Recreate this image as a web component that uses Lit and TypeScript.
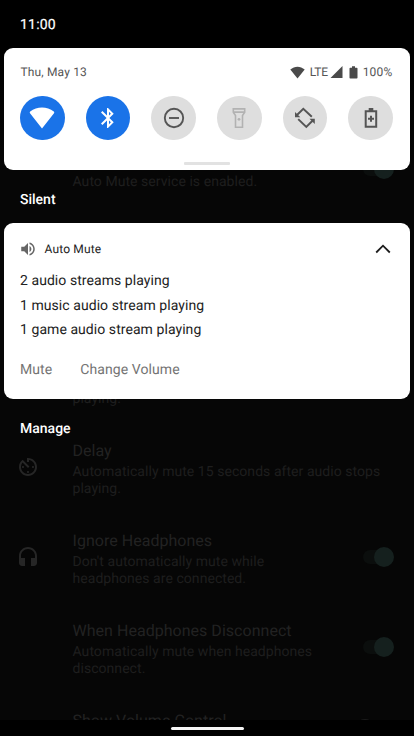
import { LitElement, html, svg, css, nothing } from "lit";
import { customElement, property } from "lit/decorators.js";

const icons: Record<string, unknown> = {
  wifi: svg`<path transform="translate(-1 1)" d="M13 21.4 1 6.3Q.3 5.3 1.2 4.6C8-.9 18-.9 24.8 4.6Q25.7 5.3 25 6.3Z"/>`,
  bluetooth: svg`<path d="M17.71 7.71 12 2h-1v7.59L6.41 5 5 6.41 10.59 12 5 17.59 6.41 19 11 14.41V22h1l5.71-5.71-4.3-4.29zM13 5.83l1.88 1.88L13 9.59zm1.88 10.46L13 18.17v-3.76z"/>`,
  dnd: svg`<g fill="none" stroke="currentColor" stroke-width="1.9"><circle cx="12" cy="12" r="9.2"/><path d="M7 12h10"/></g>`,
  torch: svg`<g fill="none" stroke="currentColor" stroke-width="1.6"><path d="M6.300 2.900h11.400v3.400l-2.200 3.200v11.800H8.500V9.500L6.300 6.300zM6.300 6.100h11.400"/></g><circle cx="12" cy="13.300" r="1.400"/>`,
  rotate: svg`<path fill="none" stroke="currentColor" stroke-width="2" d="M4 9l6.300-6.200 8.500 8M5.200 13.100l8.100 7.800 6.200-6.100"/><path d="M2 6V11.300h5.300zM21.800 12.700v5.300L16.500 12.700z"/>`,
  saver: svg`<path fill="none" stroke="currentColor" stroke-width="2" d="M6.700 5.200h10.500v15.500H6.700zM12 9.800v6M9 12.800h6"/><path d="M9.700 2h4.600v3H9.700z"/>`,
  timer: svg`<path d="M11 17c0 .55.45 1 1 1s1-.45 1-1-.45-1-1-1-1 .45-1 1zm0-14v4h2V5.080c3.390.49 6 3.390 6 6.920 0 3.870-3.130 7-7 7s-7-3.130-7-7c0-1.680.59-3.220 1.580-4.420L12 13l1.410-1.410-6.800-6.800v.02C4.420 6.450 3 9.050 3 12c0 4.970 4.020 9 9 9 4.970 0 9-4.030 9-9s-4.030-9-9-9zm7 9c0-.55-.45-1-1-1s-1 .45-1 1 .45 1 1 1 1-.45 1-1zM6 12c0 .55.45 1 1 1s1-.45 1-1-.45-1-1-1-1 .45-1 1z"/>`,
  headphones: svg`<path d="M12 2c-4.970 0-9 4.030-9 9v7c0 1.660 1.340 3 3 3h3v-8H5v-2c0-3.870 3.130-7 7-7s7 3.130 7 7v2h-4v8h3c1.660 0 3-1.340 3-3v-7c0-4.970-4.030-9-9-9z"/>`,
  volume: svg`<path d="M3 9v6h4l5 5V4L7 9zm13.500 3c0-1.770-1.020-3.290-2.500-4.030v8.050c1.480-.73 2.500-2.250 2.500-4.020zM14 3.230v2.060c2.890.86 5 3.540 5 6.710s-2.110 5.850-5 6.710v2.060c4.010-.91 7-4.490 7-8.770s-2.990-7.860-7-8.770z"/>`,
};

const icon = (name: string, cls = "") =>
  html`<svg class="icon ${cls}" viewBox="0 0 24 24" fill="currentColor" overflow="visible">${icons[name]}</svg>`;

@customElement("quick-panel")
export class QuickPanel extends LitElement {
  static styles = css`
    :host { display: flex; flex-direction: column; box-sizing: border-box; height: 122px; margin: 0 4px;
      padding: 15.500px 17.500px 0 16.500px; border-radius: 9px; background: #fff; color: #555; }
    .status { display: flex; align-items: center; height: 17px; font-size: 12px; }
    .date { letter-spacing: 0.150px; margin-right: auto; }
    .lte { margin: 0 2px 0 5px; font-size: 12px; letter-spacing: -0.300px; }
    .pct { letter-spacing: 0.200px; margin-left: 5px; }
    .glyph { display: block; fill: #4a4a4a; }
    .batt { margin-left: 6px; }
    .tiles { display: flex; justify-content: space-between; margin: 15px -0.500px 0 -0.500px; }
    .tile { display: grid; place-items: center; width: 44.500px; height: 44.500px; border-radius: 50%; background: #dedede; color: #555; }
    .tile.on { background: #1a73e8; color: #fff; }
    .tile.dim { color: #b2b2b2; }
    .icon { display: block; width: 24px; height: 24px; }
    .grip { align-self: center; width: 46px; height: 3px; margin-top: 21.500px; background: #e2e2e2; border-radius: 1px; }
  `;
  render() {
    const tiles = [["wifi", "on"], ["bluetooth", "on"], ["dnd", ""], ["torch", "dim"], ["rotate", ""], ["saver", ""]];
    return html`
      <div class="status">
        <span class="date">Thu, May 13</span>
        <svg class="glyph" width="15" height="13" viewBox="0 0 15 13"><path d="M7.500 12.500.3 3.600C4.500-.3 10.500-.3 14.700 3.600Z"/></svg>
        <span class="lte">LTE</span>
        <svg class="glyph" width="13" height="12" viewBox="0 0 13 12"><path d="M.5 12 12.500 0v12z"/></svg>
        <svg class="glyph batt" width="9" height="13" viewBox="0 0 9 13"><path d="M3 .3h3v1.500h1.700q.8 0 .8.8v9.200q0 .8-.8.800H1.300q-.8 0-.8-.8V2.600q0-.8.8-.8H3z"/></svg>
        <span class="pct">100%</span>
      </div>
      <div class="tiles">${tiles.map(([n, c]) => html`<div class="tile ${c}">${icon(n)}</div>`)}</div>
      <div class="grip"></div>`;
  }
}

@customElement("audio-notification")
export class AudioNotification extends LitElement {
  static styles = css`
    :host { display: flex; flex-direction: column; box-sizing: border-box; height: 176px; margin: 0 4px;
      padding: 16px 16px 0; border-radius: 9px; background: #fff; color: #222; }
    .head { display: flex; align-items: center; height: 20px; font-size: 12px; letter-spacing: 0.150px; }
    .icon { display: block; width: 18px; height: 18px; margin: -1px 8px 0 -1.500px; color: #666; }
    .chev { display: block; width: 16px; height: 10px; margin: -1px 3.500px 0 auto; fill: none; stroke: #1c1c1c; stroke-width: 1.800; }
    .lines { margin-top: 10px; font-size: 14px; line-height: 24.500px; letter-spacing: 0.060px; }
    .actions { display: flex; gap: 28px; margin-top: 17px; font-size: 14px; line-height: 20px; letter-spacing: 0.080px; color: #747474; }
  `;
  render() {
    return html`
      <div class="head">${icon("volume")}<span>Auto Mute</span>
        <svg class="chev" viewBox="0 0 16 10"><path d="M1.200 8.500 8 1.700l6.800 6.800"/></svg></div>
      <div class="lines">
        <div>2 audio streams playing</div>
        <div>1 music audio stream playing</div>
        <div>1 game audio stream playing</div>
      </div>
      <div class="actions"><span>Mute</span><span>Change Volume</span></div>`;
  }
}

@customElement("setting-row")
export class SettingRow extends LitElement {
  @property() label = "";
  @property() glyph = "";
  @property() toggle = "";
  @property({ attribute: false }) detail: string[] = [];
  static styles = css`
    :host { display: flex; box-sizing: border-box; height: 90px; padding: 0 20px 4px 16px; align-items: center; color: #222; }
    :host([compact]) { height: 74px; }
    .lead { flex: none; width: 56.500px; }
    .icon { display: block; width: 24px; height: 24px; color: #262626; }
    .text { flex: 1; min-width: 0; align-self: flex-start; padding-top: 17px; white-space: nowrap; }
    .label { font-size: 16px; line-height: 20px; height: 20px; letter-spacing: 0.030px; }
    .detail { margin-top: 3px; font-size: 14px; line-height: 16.500px; letter-spacing: 0.050px; color: #1e1e1e; }
    .line { height: 16.500px; }
    .track { display: flex; justify-content: flex-end; align-items: center; flex: none; width: 29px; height: 14px; margin-right: 2px; border-radius: 7px; background: #0b0e0d; }
    .thumb { width: 20px; height: 20px; border-radius: 50%; margin-right: -1.500px; flex: none; background: #15201e; }
    .off { justify-content: flex-start; }
    .off .thumb { background: #1b1b1b; margin-left: -8px; }
  `;
  render() {
    return html`
      <div class="lead">${this.glyph ? icon(this.glyph) : nothing}</div>
      <div class="text"><div class="label">${this.label}</div>
        <div class="detail">${this.detail.map((d) => html`<div class="line">${d}</div>`)}</div></div>
      ${this.toggle ? html`<div class="track ${this.toggle}"><div class="thumb"></div></div>` : nothing}`;
  }
}

@customElement("app-root")
export class AppRoot extends LitElement {
  static styles = css`
    :host { display: grid; grid-template: 736px / 414px; overflow: hidden; font-family: Roboto, "Liberation Sans", sans-serif;
      text-rendering: geometricPrecision;
      background: linear-gradient(#000 0, #000 60px, #060606 170px, #060606 100%); }
    .settings, .shade { grid-area: 1 / 1; min-width: 0; }
    .settings { display: flex; flex-direction: column; height: 720px; padding-top: 134px; box-sizing: border-box; overflow: hidden; }
    .settings setting-row { flex: none; }
    .service { margin-bottom: 126px; }
    .shade { display: flex; flex-direction: column; z-index: 1; color: #fff; }
    .clock { height: 48px; box-sizing: border-box; padding: 15px 20px 0; font-size: 14px; line-height: 20px; letter-spacing: 0.200px; -webkit-text-stroke: 0.200px #fff; }
    .section { padding: 0 20px; font-size: 14px; line-height: 20px; font-weight: 500; }
    .silent { margin: 20px 0 13px; }
    .manage { margin-top: 20px; }
    .nav { display: flex; justify-content: center; align-items: center; height: 16px; margin-top: auto; padding-top: 1px; box-sizing: border-box; background: #000; }
    .bar { width: 73px; height: 3px; border-radius: 1.500px; background: #f4f4f4; }
  `;
  render() {
    return html`
      <div class="settings">
        <setting-row class="service" compact toggle="on" .detail=${["Auto Mute service is enabled."]}></setting-row>
        <setting-row .detail=${["", "playing."]}></setting-row>
        <setting-row label="Delay" glyph="timer" .detail=${["Automatically mute 15 seconds after audio stops", "playing."]}></setting-row>
        <setting-row label="Ignore Headphones" glyph="headphones" toggle="on" .detail=${["Don't automatically mute while", "headphones are connected."]}></setting-row>
        <setting-row label="When Headphones Disconnect" toggle="on" .detail=${["Automatically mute when headphones", "disconnect."]}></setting-row>
        <setting-row compact label="Show Volume Control" toggle="off"></setting-row>
      </div>
      <div class="shade">
        <div class="clock">11:00</div>
        <quick-panel></quick-panel>
        <div class="section silent">Silent</div>
        <audio-notification></audio-notification>
        <div class="section manage">Manage</div>
        <div class="nav"><div class="bar"></div></div>
      </div>`;
  }
}
